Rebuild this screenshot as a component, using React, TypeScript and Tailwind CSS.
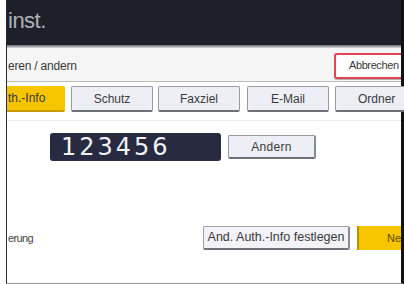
export default function App() {
  const tab = "h-[26px] w-[82px] shrink-0 flex items-center justify-center bg-[#eeeef7] border border-[#9a9aa6] border-b-2 border-b-[#6e6e78] rounded-[2px] text-[12px] text-[#3a3a3a]"

  return (
    <div className="w-[404px] h-[284px] flex bg-white overflow-hidden font-['Liberation_Sans',Arial,sans-serif]">
      <div className="w-[6px] shrink-0 bg-white" />
      <div className="flex-1 flex flex-col min-w-0 border-l border-l-[#2a2a2e] border-r-[3px] border-r-[#111] border-b border-b-[#9a9a9a]">
        {/* title bar */}
        <div className="h-[45px] shrink-0 bg-[#1d2028] flex items-center pl-[1px]">
          <span className="text-[22px] leading-none text-[#aeb2ba] tracking-[-0.5px] -mt-[4px]">inst.</span>
        </div>
        <div className="h-[3px] shrink-0 bg-gradient-to-b from-[#6a6d75] to-[#dcdce0]" />

        {/* sub header */}
        <div className="h-[34px] shrink-0 bg-[#f5f5f5] border-b border-[#bdbdbd] flex items-center justify-between">
          <span className="text-[12px] text-[#3a3a3a] tracking-[-0.2px] pl-[1px] mt-[2px]">eren / andern</span>
          <div className="h-[26px] w-[67px] mt-[2px] flex items-center pl-[13px] bg-white border-2 border-r-0 border-[#e24452] rounded-l-[3px] shadow-[0_1px_0_#b0b0b0] text-[11px] text-[#3a3a3a] tracking-[-0.4px] whitespace-nowrap overflow-hidden">
            Abbrechen
          </div>
        </div>

        {/* tabs */}
        <div className="mt-[4px] h-[26px] shrink-0 flex">
          <div className="h-[26px] w-[58px] shrink-0 flex items-center pl-[1px] bg-[#f6c500] border-b-2 border-b-[#c79c00] rounded-r-[2px] text-[12px] text-[#3a3a3a] whitespace-nowrap">
            th.-Info
          </div>
          <div className={tab + " ml-[6px]"}>Schutz</div>
          <div className={tab + " ml-[5px]"}>Faxziel</div>
          <div className={tab + " ml-[7px]"}>E-Mail</div>
          <div className={tab + " ml-[6px] justify-start pl-[22px]"}>Ordner</div>
        </div>
        <div className="mt-[8px] h-px shrink-0 bg-[#ececec]" />

        {/* number row */}
        <div className="mt-[12px] h-[28px] shrink-0 flex items-center">
          <div className="ml-[43px] w-[171px] h-[28px] bg-[#272a40] rounded-[3px] flex items-center pl-[11px] text-[24px] leading-none text-[#f2f2f4] tracking-[3px] font-['DejaVu_Sans',sans-serif]">
            123456
          </div>
          <div className="ml-[7px] w-[88px] h-[24px] flex items-center justify-center bg-[#eeeef7] border border-[#9a9aa6] border-b-2 border-b-[#6e6e78] border-r-2 border-r-[#8a8a94] rounded-[2px] text-[12px] text-[#3a3a3a] tracking-[0.3px]">
            Andern
          </div>
        </div>

        {/* bottom row */}
        <div className="mt-[65px] h-[24px] shrink-0 flex items-center">
          <span className="text-[11px] text-[#444] tracking-[-0.6px] pl-[1px] w-[196px] shrink-0">erung</span>
          <div className="w-[147px] h-[24px] shrink-0 flex items-center justify-center bg-[#f2f2f8] border border-[#a0a0aa] border-b-2 border-b-[#70707a] border-r-2 border-r-[#8a8a94] rounded-[2px] text-[12.5px] text-[#3a3a3a] whitespace-nowrap">
            And. Auth.-Info festlegen
          </div>
          <div className="ml-[7px] flex-1 h-[24px] bg-[#f6c500] border-l-2 border-l-[#b89200] flex items-center pl-[28px] text-[11px] text-[#5a4a00] whitespace-nowrap">
            Ne
          </div>
        </div>
      </div>
    </div>
  )
}
